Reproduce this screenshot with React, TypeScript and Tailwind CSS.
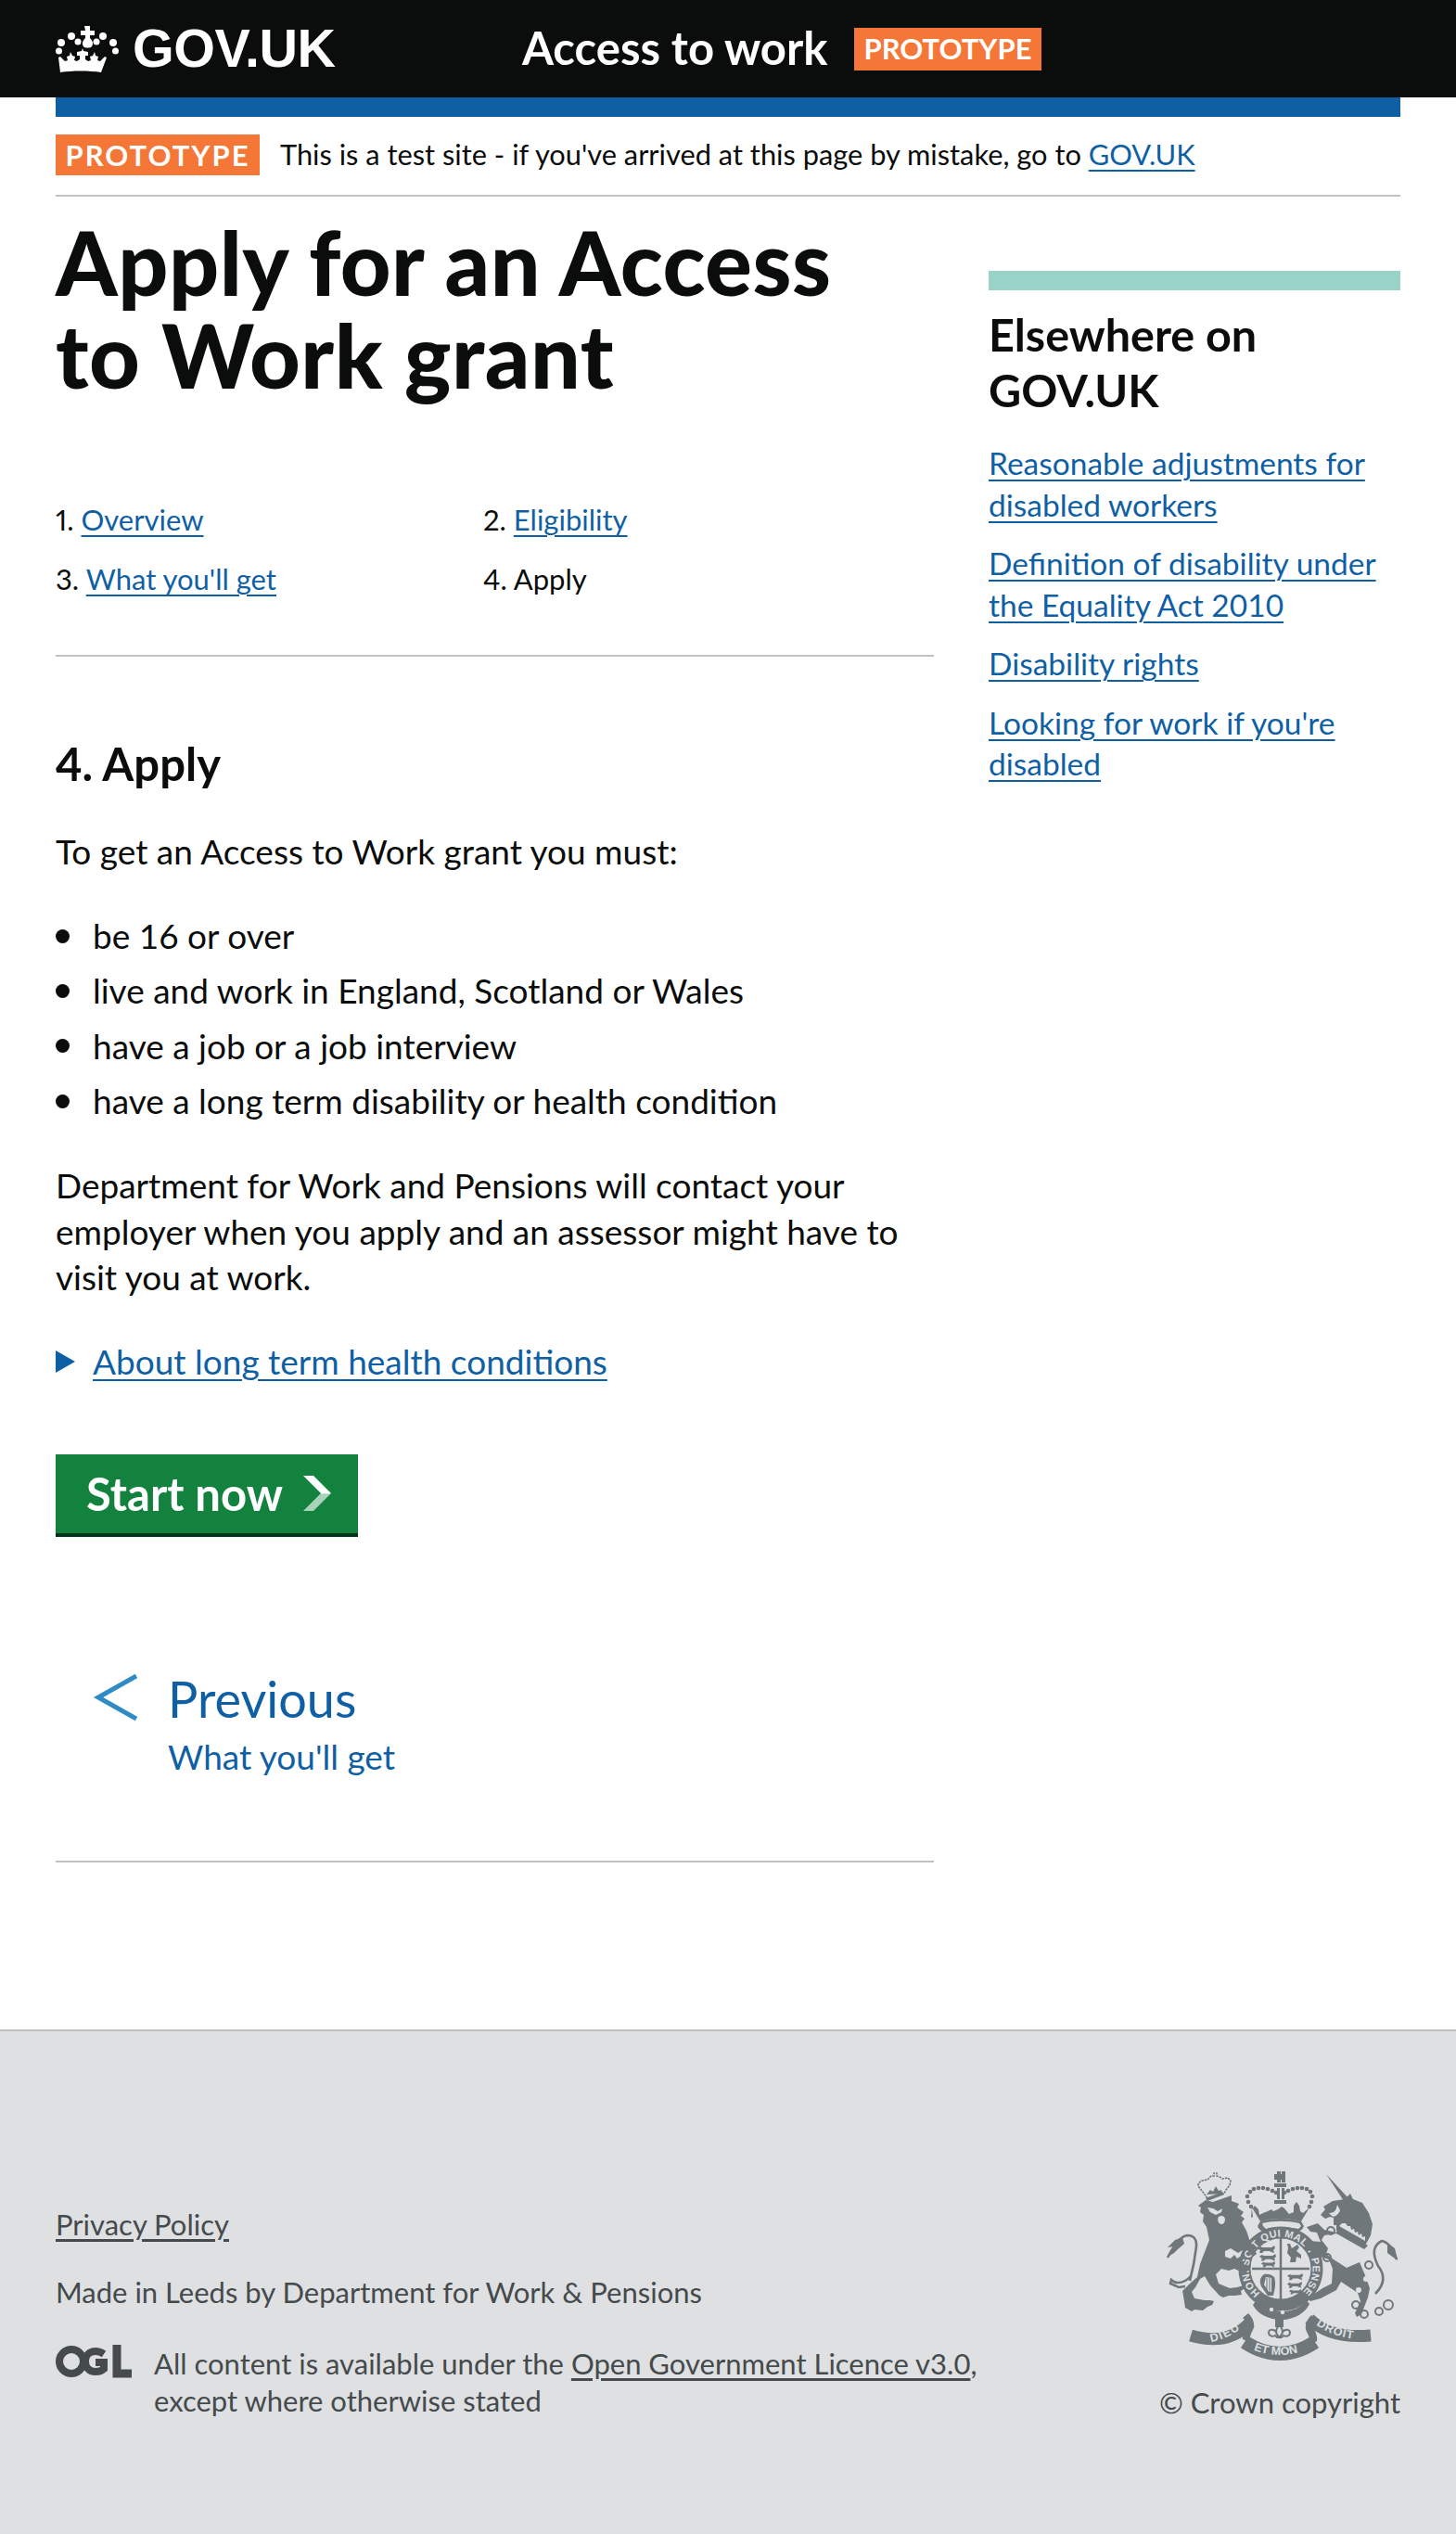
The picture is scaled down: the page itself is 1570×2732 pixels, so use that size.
import React from "react";

const A = ({ children, className = "" }: { children: React.ReactNode; className?: string }) => (
  <a href="#" className={"text-[#0f5fa5] underline decoration-2 underline-offset-[5px] " + className}>{children}</a>
);

function CrownLogo() {
  return (
    <svg viewBox="0 0 68 52" className="w-[68px] h-[52px] shrink-0" fill="#fff">
      <path d="M31 1h6v5h5v5h-5v3c3 3 4 6 2 9-1 2-8 2-9 0-2-3-1-6 2-9v-3h-5V6h5z" />
      <circle cx="6" cy="19" r="4" /><circle cx="17" cy="12" r="4" /><circle cx="51" cy="12" r="4" /><circle cx="62" cy="19" r="4" />
      <circle cx="24" cy="18" r="3.5" /><circle cx="44" cy="18" r="3.5" />
      <circle cx="3.5" cy="28" r="3.5" /><circle cx="64.5" cy="28" r="3.5" />
      <path d="M5 34l5 5 3-1-1-4 3-1 1-4 2 4 3 1-1 4 3 1 3-2 0-4-3 0 0-4 5-1 1-3 1 3 5 1 0 4-3 0 0 4 3 2 3-1-1-4 3-1 2-4 1 4 3 1-1 4 3 1 5-5 2 1-6 16c-13-2-31-2-44 0L3 35z" />
    </svg>
  );
}

function Crest() {
  const c = "#6f777b";
  const bg = "#dee0e2";
  const dots = [[118,56],[117,50],[120,45],[124,42],[129,41],[134,41],[139,42],[144,44],[148,46],[157,46],[161,44],[166,42],[171,41],[176,41],[181,42],[185,45],[187,50],[186,56],[184,61],[121,61]];
  const strip = (x: number, y: number, k: number) => (
    <path key={`${x}-${y}`} d={`M${x} ${y+3}l3-2 2 1 10 0 3-2 1 3-2 2 1 3-3-1-2-1-6 0-2 2-3 0 1-3-2-1z`} transform={`translate(${x*(1-k)} ${y*(1-k)}) scale(${k})`} />
  );
  const font = "Liberation Sans, sans-serif";
  return (
    <svg viewBox="28 20 254 210" className="w-[254px] h-[210px]" fill={c}>
      <defs>
        <path id="garter" d="M130.800 154.400 A 34.500 34.500 0 1 1 175.200 154.400" />
        <path id="rib-l" d="M72 208 Q94 206 116 188" />
        <path id="rib-m" d="M120 214 Q152 228 184 214" />
        <path id="rib-r" d="M188 186 Q208 202 236 204" />
      </defs>
      {/* central crown */}
      <path d="M149 23h4v3h1v-3h4v12h-4v-3h-1v3h-4v-3h-3v-6h3z" />
      <path d="M146 36h13v4h-13z" />
      <path d="M149 41h3v12h-3zM154 41h3v12h-3z" />
      <path d="M146 54h13v4h-13z" />
      {dots.map(([x, y], i) => (<circle key={i} cx={x} cy={y} r="2.3" />))}
      <path d="M122 62l9 15c14-4 30-4 44 0l9-15-7 6-3-2-1-6-3-4-3 4 0 7-5 2-5-6-3-2-4 3-5 2-2-2-4 2-5 2-4 2-1-6-4-4-3 4 1 8-2 1z" />
      <path d="M131 77c13-4 31-4 44 0l3 5c-1 3-3 5-6 6-12-3-26-3-38 0-3-1-5-3-6-6z" />
      <path d="M133 79c12-3 27-3 40 0l2 3-3 3c-11-2-23-2-35 0l-3-3z" fill={bg} />
      {/* garter */}
      <circle cx="153" cy="128" r="39" fill="none" stroke={c} strokeWidth="13" />
      <text fontSize="11" fontFamily={font} fontWeight="700" fill={bg}>
        <textPath href="#garter" textLength="166">HONI SOIT QUI MAL Y PENSE</textPath>
      </text>
      <circle cx="153" cy="128" r="32" fill={bg} />
      <path d="M153 95v70M122 128h62" stroke={c} strokeWidth="2.5" fill="none" />
      {strip(128,103,1)}{strip(130,112,0.95)}{strip(132,120,0.8)}
      {strip(160,133,0.9)}{strip(160,142,0.85)}{strip(162,150,0.7)}
      <path d="M160 101l3 0 2 5 6-4 2 3-3 4 5 4 0 4-5-2-1 6-6 0 1-5-4-5 1-5z" />
      <path d="M135 134c-5 4-5 8-3 13l7 10 6 0c2-8 3-14 1-20-3-3-7-4-11-3z" />
      <path d="M137 137l6 1 0 15-3 0-5-8z" fill={bg} />
      <path d="M138 138l0 13M141 138l0 15" stroke={c} strokeWidth="1" />
      {/* lower garter */}
      <path d="M128 160c8 9 16 13 26 14 10 0 20-3 27-12l3 4c-4 9-16 17-30 17-14 0-26-6-31-16z" />
      <path d="M126 164l7-4 5 7-5 6z" />
      <circle cx="143" cy="172" r="2.2" fill={bg} /><circle cx="155" cy="175" r="2.2" fill={bg} />
      {/* lion */}
      <path d="M64 60l8-6 8 2 20-7 0 6 8 3-2 4 7 5-3 4 4 3-3 4 5 9 3 9 8 16-4 3-8-9-8 5-8-5-6 3 0 6 6 2 4-4 3 4 3-2 2 5 3 0-1 6 5 4-4 3-11-5-6 2-8-2-6 6 3 10 12 5 8-1 7-2 1 3-4 3 1 4-8 1-6 0-6 2-4-2-10-11-6-10-5 3-5 9-4 5 3 7 11 2 6 0 4 1-2 4-5 2-5 4-9-1-3 2-7-4-2-13-1-5 7-7 9-8 3-14 10-26-3-14-4-6 1-7-4-3 1-5z" />
      <path d="M74 62l6 1 5 3 5-3-1 4-6 3-6-3z" fill={bg} />
      <path d="M86 72c3-2 7-1 7 3 0 3-2 5-4 5-3 0-5-5-3-8z" fill={bg} />
      <path d="M55 141Q60 122 62 104 63 92 52 92 42 94 31 116" fill="none" stroke={c} strokeWidth="2.6" />
      <path d="M47 94l-8 3-8 8 7-1-8 12 8-5 4-4 7-6z" />
      <path d="M56 136q-6 7-14 7-4 0-7-3l-1 4 9 4 7-1" fill="none" stroke={c} strokeWidth="2.6" />
      {/* lion crown */}
      <path d="M74 52l-6-8-4-5 0-3 4-3 6-1 4-4 3 0 0-3 3 0 0 3 3 1 3 2 6-1 3 3-1 5-4 5-2 4z" fill="none" stroke={c} strokeWidth="1.6" strokeDasharray="2.4 1" />
      <path d="M72 52l18-7 2 3-18 7z" />
      <path d="M73 48l4-5 3 2 3-6 3 5 3-1 1 4z" />
      {/* unicorn */}
      <path d="M202 26l24 26-5 3z" />
      <path d="M222 53l6-6 3 6 10 4 7 11 4 12-2 12-6 11-3 1-28-17 0-6-3 0 0-8-4-1-5 2-5-4 5-6-2-3 10-6z" />
      <path d="M215 83l32 20-4 4-30-17-13 2-3 5 7 9-2 6 8 6 14 9 14-6 6 14 5 14-2 10-7 18-5 3-2-4 6-13-3-9-18-12-5 9-17 9-11 3-3-3 16-11 10-5 1-16-4-10-16-5-11-11 5-4 13 1-4-10-7-1-4-5 12-4 7 7 13 3z" />
      <path d="M205 68c8 0 8-6 9-9l3 6c-2 5-6 8-9 6z" fill={bg} />
      <path d="M216 82l28 16 0-5-3 1-1-4-3 2-1-4-3 1-1-4-3 1-1-4-3 0-2-3-4 0z" fill={bg} />
      <circle cx="207" cy="87" r="4" fill="none" stroke={c} strokeWidth="2" />
      <circle cx="203" cy="116" r="4" fill="none" stroke={c} strokeWidth="2" />
      <circle cx="248" cy="124" r="4" fill="none" stroke={c} strokeWidth="2" />
      <circle cx="234" cy="167" r="4" fill="none" stroke={c} strokeWidth="2" />
      <circle cx="243" cy="177" r="4" fill="none" stroke={c} strokeWidth="2" />
      <circle cx="259" cy="174" r="4" fill="none" stroke={c} strokeWidth="2" />
      <circle cx="269" cy="167" r="5" fill="none" stroke={c} strokeWidth="2" />
      <circle cx="245" cy="139" r="3" fill={bg} /><circle cx="237" cy="151" r="3" fill={bg} />
      <path d="M255 155Q270 140 258 125 248 105 262 98 272 100 278 118" fill="none" stroke={c} strokeWidth="2.6" />
      <path d="M268 100l8 6 3 13-7-5-4-3z" />
      {/* ribbon */}
      <g fill="none" stroke={c} strokeWidth="14">
        <path d="M56 200 Q96 212 120 186" strokeWidth="13" />
        <path d="M114 207 Q152 232 190 207" strokeWidth="15" />
        <path d="M184 182 Q206 204 250 200" strokeWidth="13" />
      </g>
      <path d="M118 176c5 5 8 12 5 18-2 4-4 7-3 14l-8-4c-1-6 2-10 3-14 1-4 0-7-3-9zM186 178c-5 5-8 12-5 18 2 4 4 7 3 14l8-4c1-6-2-10-3-14-1-4 0-7 3-9z" />
      <text fontSize="12.500" fontFamily={font} fontWeight="700" fill={bg} letterSpacing="1.500">
        <textPath href="#rib-l" startOffset="6">DIEU</textPath>
      </text>
      <text fontSize="12.500" fontFamily={font} fontWeight="700" fill={bg}>
        <textPath href="#rib-m" startOffset="4">ET MON</textPath>
      </text>
      <text fontSize="12.500" fontFamily={font} fontWeight="700" fill={bg} letterSpacing="1">
        <textPath href="#rib-r" startOffset="4">DROIT</textPath>
      </text>
      {/* fleur */}
      <path d="M147 182h9v9h-9z" />
      <path d="M151.500 188c-3 5-4 6-3 10l3 4 3-4c1-4 0-5-3-10zM148 196c-3-3-8-3-8 1 0 3 4 5 7 3l2 2h5l2-2c3 2 7 0 7-3 0-4-5-4-8-1" fill="none" stroke={c} strokeWidth="2" />
    </svg>
  );
}

function OGL() {
  return (
    <svg viewBox="0 0 82 36" className="w-[82px] h-[36px] shrink-0" fill="none" stroke="#454a4c" strokeWidth="8">
      <circle cx="17" cy="18" r="13" />
      <path d="M52 10c-3-2-6-3-9-3-7 0-11 5-11 11s4 11 11 11c4 0 7-1 9-3V19H43" />
      <path d="M66 0v31h16" strokeWidth="9" />
    </svg>
  );
}

export default function App() {
  return (
    <div className="min-h-[2732px] bg-white text-[#0b0c0c] font-['Lato','Liberation_Sans',sans-serif]">
      <header className="h-[105px] bg-[#0b0c0c] px-[60px] flex items-center text-white">
        <div className="w-[503px] flex items-center gap-[15px]">
          <CrownLogo />
          <span className="font-['Liberation_Sans',sans-serif] font-bold text-[57.500px] leading-none tracking-[-0.5px]">GOV.UK</span>
        </div>
        <span className="font-bold text-[49px] leading-none w-[358px] pb-[3px]">Access to work</span>
        <span className="bg-[#f47738] w-[202px] h-[46px] flex items-center justify-center font-bold text-[31px] leading-none">PROTOTYPE</span>
      </header>

      <div className="mx-[60px]">
        <div className="h-[21px] bg-[#0f5fa5]" />
        <div className="h-[86px] flex items-center border-b-2 border-[#bfc1c3] pb-[2px]">
          <span className="bg-[#f47738] text-white w-[220px] h-[44px] flex items-center justify-center font-bold text-[31px] tracking-[2px] leading-none">PROTOTYPE</span>
          <span className="ml-[22px] text-[30.8px] leading-none">This is a test site - if you've arrived at this page by mistake, go to <A>GOV.UK</A></span>
        </div>

        <div className="flex justify-between">
          <main className="w-[947px]">
            <h1 className="text-[95px] leading-[100px] font-black tracking-[0.5px] mt-[20px]">Apply for an Access<br />to Work grant</h1>
            <ol className="mt-[106px] grid grid-cols-[461px_1fr] gap-y-[19px] text-[31px] leading-[45px] [font-variant-numeric:proportional-nums]">
              <li>1. <A>Overview</A></li>
              <li>2. <A>Eligibility</A></li>
              <li>3. <A>What you'll get</A></li>
              <li>4. Apply</li>
            </ol>
            <div className="mt-[59px] h-[2px] bg-[#bfc1c3]" />
            <h2 className="mt-[82px] text-[49px] leading-[66px] font-bold">4. Apply</h2>
            <p className="mt-[37px] text-[37px] leading-[50px]">To get an Access to Work grant you must:</p>
            <ul className="mt-[41px] text-[37px] leading-[50px] flex flex-col gap-[9.4px]">
              {["be 16 or over", "live and work in England, Scotland or Wales", "have a job or a job interview", "have a long term disability or health condition"].map((t) => (
                <li key={t} className="flex items-center">
                  <span className="w-[15px] h-[15px] rounded-full bg-[#0b0c0c] mr-[25px] shrink-0" />
                  {t}
                </li>
              ))}
            </ul>
            <p className="mt-[41px] text-[37px] leading-[49.5px] w-[947px]">Department for Work and Pensions will contact your employer when you apply and an assessor might have to visit you at work.</p>
            <div className="mt-[41px] flex items-center text-[37px] leading-[50px]">
              <span className="w-0 h-0 border-y-[12px] border-y-transparent border-l-[21px] border-l-[#0f5fa5] mr-[19px]" />
              <A>About long term health conditions</A>
            </div>
            <a href="#" className="mt-[75px] w-[326px] h-[89px] bg-[#13823f] border-b-4 border-[#003618] flex items-center pl-[33px] text-white font-bold text-[49px] leading-none">
              Start now
              <svg viewBox="0 0 30 38" className="w-[30px] h-[38px] ml-[22px]">
                <defs><linearGradient id="g" x1="0" y1="0" x2="0" y2="1"><stop offset="0.5" stopColor="#fff" /><stop offset="0.52" stopColor="#a9d3b8" /></linearGradient></defs>
                <path d="M0 0h11l19 19-19 19H0l19-19z" fill="url(#g)" />
              </svg>
            </a>
            <a href="#" className="mt-[139px] ml-[40px] flex text-[#0f5fa5]">
              <svg viewBox="0 0 48 52" className="w-[48px] h-[52px] mt-[8px] shrink-0" fill="none" stroke="#2e8bc5" strokeWidth="5"><path d="M47 3L6 26l41 23" /></svg>
              <div className="ml-[33px]">
                <div className="text-[54px] leading-[72px]">Previous</div>
                <div className="text-[37px] leading-[48px] mt-[2px]">What you'll get</div>
              </div>
            </a>
            <div className="mt-[88px] h-[2px] bg-[#bfc1c3]" />
          </main>

          <aside className="w-[444px] pt-[80px]">
            <div className="h-[21px] bg-[#99d2c7]" />
            <h2 className="mt-[17px] text-[48.500px] leading-[60px] font-bold">Elsewhere on GOV.UK</h2>
            <ul className="mt-[27px] text-[33.500px] leading-[44.500px] flex flex-col gap-[19px]">
              <li><A>Reasonable adjustments for disabled workers</A></li>
              <li><A>Definition of disability under the Equality Act 2010</A></li>
              <li><A>Disability rights</A></li>
              <li><A>Looking for work if you're disabled</A></li>
            </ul>
          </aside>
        </div>
      </div>

      <footer className="mt-[180px] h-[546px] bg-[#dee0e2] border-t-2 border-[#bfc1c3] px-[60px] pt-[148px] text-[31px] leading-[40px] text-[#454a4c] flex justify-between">
        <div className="pt-[40px]">
          <a href="#" className="underline underline-offset-[4px]">Privacy Policy</a>
          <p className="mt-[33px]">Made in Leeds by Department for Work &amp; Pensions</p>
          <div className="mt-[37px] flex">
            <OGL />
            <p className="ml-[24px] w-[950px]">All content is available under the <a href="#" className="underline underline-offset-[4px]">Open Government Licence v3.0</a>,<br />except where otherwise stated</p>
          </div>
        </div>
        <div className="flex flex-col items-end">
          <Crest />
          <p className="mt-[22px]">© Crown copyright</p>
        </div>
      </footer>
    </div>
  );
}
